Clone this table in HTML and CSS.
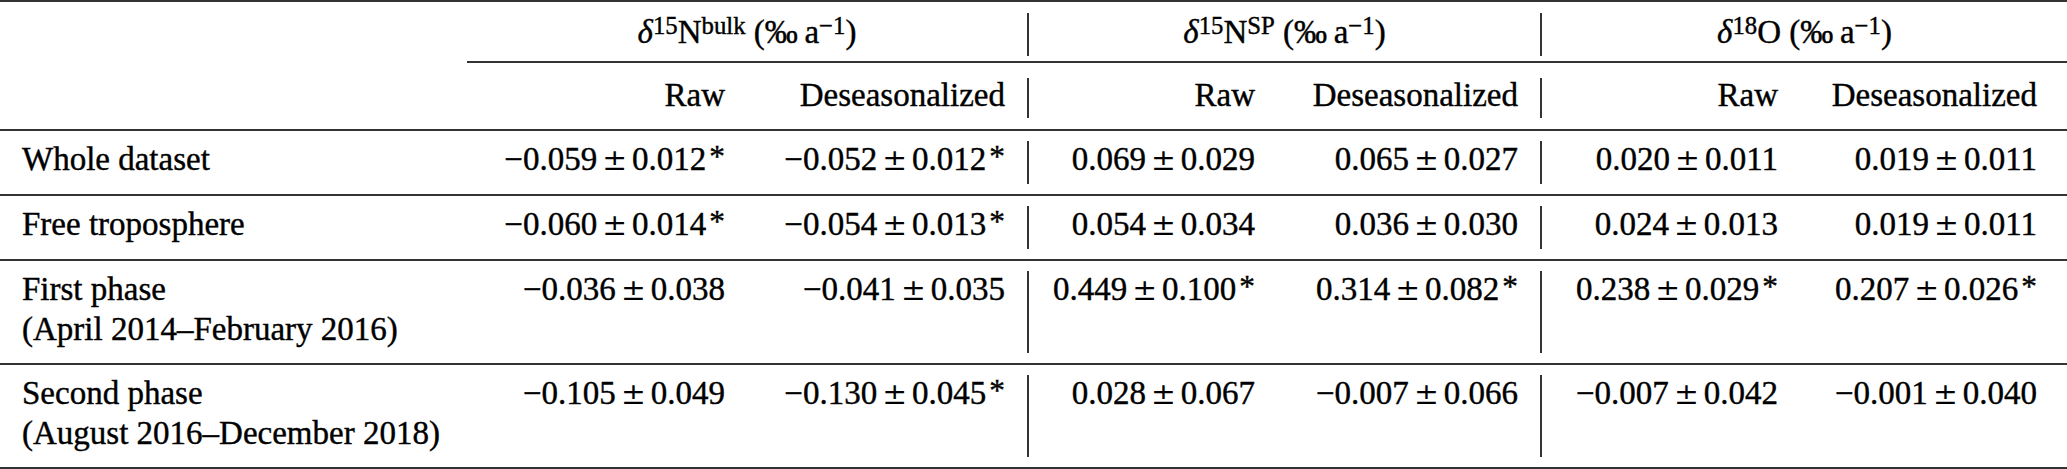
FILE: index.html
```html
<!DOCTYPE html>
<html lang="en">
<head>
  <meta charset="UTF-8" />
  <meta name="viewport" content="width=device-width, initial-scale=1.0">
  <title>N2O isotope trends</title>
  <link rel="stylesheet" href="styles.css">
</head>
<body>
  <div class="trend-table">
    <div class="rule"></div>

    <!-- group headers -->
    <div class="row head-top">
      <div class="cell"></div>
      <div class="group"><i>δ</i><sup>15</sup>N<sup>bulk</sup> <span class="unit">(‰&#8201;a<sup>−1</sup>)</span></div>
      <div class="bar"></div>
      <div class="group"><i>δ</i><sup>15</sup>N<sup>SP</sup> <span class="unit">(‰&#8201;a<sup>−1</sup>)</span></div>
      <div class="bar"></div>
      <div class="group"><i>δ</i><sup>18</sup>O <span class="unit">(‰&#8201;a<sup>−1</sup>)</span></div>
    </div>
    <div class="rule cmid"></div>

    <div class="row head-sub">
      <div class="cell"></div>
      <div class="cell num">Raw</div>
      <div class="cell num">Deseasonalized</div>
      <div class="bar"></div>
      <div class="cell num">Raw</div>
      <div class="cell num">Deseasonalized</div>
      <div class="bar"></div>
      <div class="cell num">Raw</div>
      <div class="cell num">Deseasonalized</div>
    </div>
    <div class="rule"></div>

    <div class="row">
      <div class="cell label">Whole dataset</div>
      <div class="cell num">−0.059<span class="pm">±</span>0.012<sup class="sig">*</sup></div>
      <div class="cell num">−0.052<span class="pm">±</span>0.012<sup class="sig">*</sup></div>
      <div class="bar"></div>
      <div class="cell num">0.069<span class="pm">±</span>0.029</div>
      <div class="cell num">0.065<span class="pm">±</span>0.027</div>
      <div class="bar"></div>
      <div class="cell num">0.020<span class="pm">±</span>0.011</div>
      <div class="cell num">0.019<span class="pm">±</span>0.011</div>
    </div>
    <div class="rule"></div>

    <div class="row">
      <div class="cell label">Free troposphere</div>
      <div class="cell num">−0.060<span class="pm">±</span>0.014<sup class="sig">*</sup></div>
      <div class="cell num">−0.054<span class="pm">±</span>0.013<sup class="sig">*</sup></div>
      <div class="bar"></div>
      <div class="cell num">0.054<span class="pm">±</span>0.034</div>
      <div class="cell num">0.036<span class="pm">±</span>0.030</div>
      <div class="bar"></div>
      <div class="cell num">0.024<span class="pm">±</span>0.013</div>
      <div class="cell num">0.019<span class="pm">±</span>0.011</div>
    </div>
    <div class="rule"></div>

    <div class="row">
      <div class="cell label">First phase<br>(April 2014–February 2016)</div>
      <div class="cell num">−0.036<span class="pm">±</span>0.038</div>
      <div class="cell num">−0.041<span class="pm">±</span>0.035</div>
      <div class="bar"></div>
      <div class="cell num">0.449<span class="pm">±</span>0.100<sup class="sig">*</sup></div>
      <div class="cell num">0.314<span class="pm">±</span>0.082<sup class="sig">*</sup></div>
      <div class="bar"></div>
      <div class="cell num">0.238<span class="pm">±</span>0.029<sup class="sig">*</sup></div>
      <div class="cell num">0.207<span class="pm">±</span>0.026<sup class="sig">*</sup></div>
    </div>
    <div class="rule"></div>

    <div class="row">
      <div class="cell label">Second phase<br>(August 2016–December 2018)</div>
      <div class="cell num">−0.105<span class="pm">±</span>0.049</div>
      <div class="cell num">−0.130<span class="pm">±</span>0.045<sup class="sig">*</sup></div>
      <div class="bar"></div>
      <div class="cell num">0.028<span class="pm">±</span>0.067</div>
      <div class="cell num">−0.007<span class="pm">±</span>0.066</div>
      <div class="bar"></div>
      <div class="cell num">−0.007<span class="pm">±</span>0.042</div>
      <div class="cell num">−0.001<span class="pm">±</span>0.040</div>
    </div>
    <div class="rule"></div>
  </div>
</body>
</html>
```

FILE: styles.css
```css
html, body {
  margin: 0;
  overflow: hidden;
}
body {
  font-family: "Liberation Serif", "Times New Roman", serif;
  font-size: 33px;
  line-height: 40px;
  color: #000;
  background-color: #fff;
  -webkit-text-stroke: 0.4px #000; /* pdf-like heavier strokes */
}
.trend-table {
  width: 2067px;
}
.rule {
  height: 2px;
  background-color: #333;
}
.cmid {
  margin-left: 467px; /* starts under the first data column */
}
.row {
  display: grid;
  grid-template-columns: 467px 280px 280px 2px 248px 263px 2px 258px 1fr;
}
.cell {
  padding: 8px 0 14px;
  white-space: nowrap;
}
.label {
  padding-left: 22px;
}
.num {
  text-align: right;
  padding-right: 22px;
}
.row > .num:last-child {
  padding-right: 30px;
}
/* wide math-style plus-minus */
.pm {
  font-family: "DejaVu Serif", serif;
  font-size: 0.9em;
  padding: 0 5px;
  -webkit-text-stroke: 0;
}
.bar {
  background-color: #333;
  margin: 10px 0;
}
/* header rows */
.head-top .group {
  grid-column: span 2;
  text-align: center;
  padding: 10px 0 9px;
  white-space: nowrap;
}
.head-top .bar {
  margin: 11px 0 5px;
}
.head-sub .cell {
  padding-top: 12px;
  padding-bottom: 14px;
}
.head-sub .bar {
  margin: 15px 0 11px;
}
sup {
  font-size: 0.75em;
  line-height: 0;
  vertical-align: 0.35em;
}
sup.sig {
  font-size: 0.95em;
  vertical-align: 0.1em;
  padding-left: 3px;
}
i {
  font-style: italic;
}
```
